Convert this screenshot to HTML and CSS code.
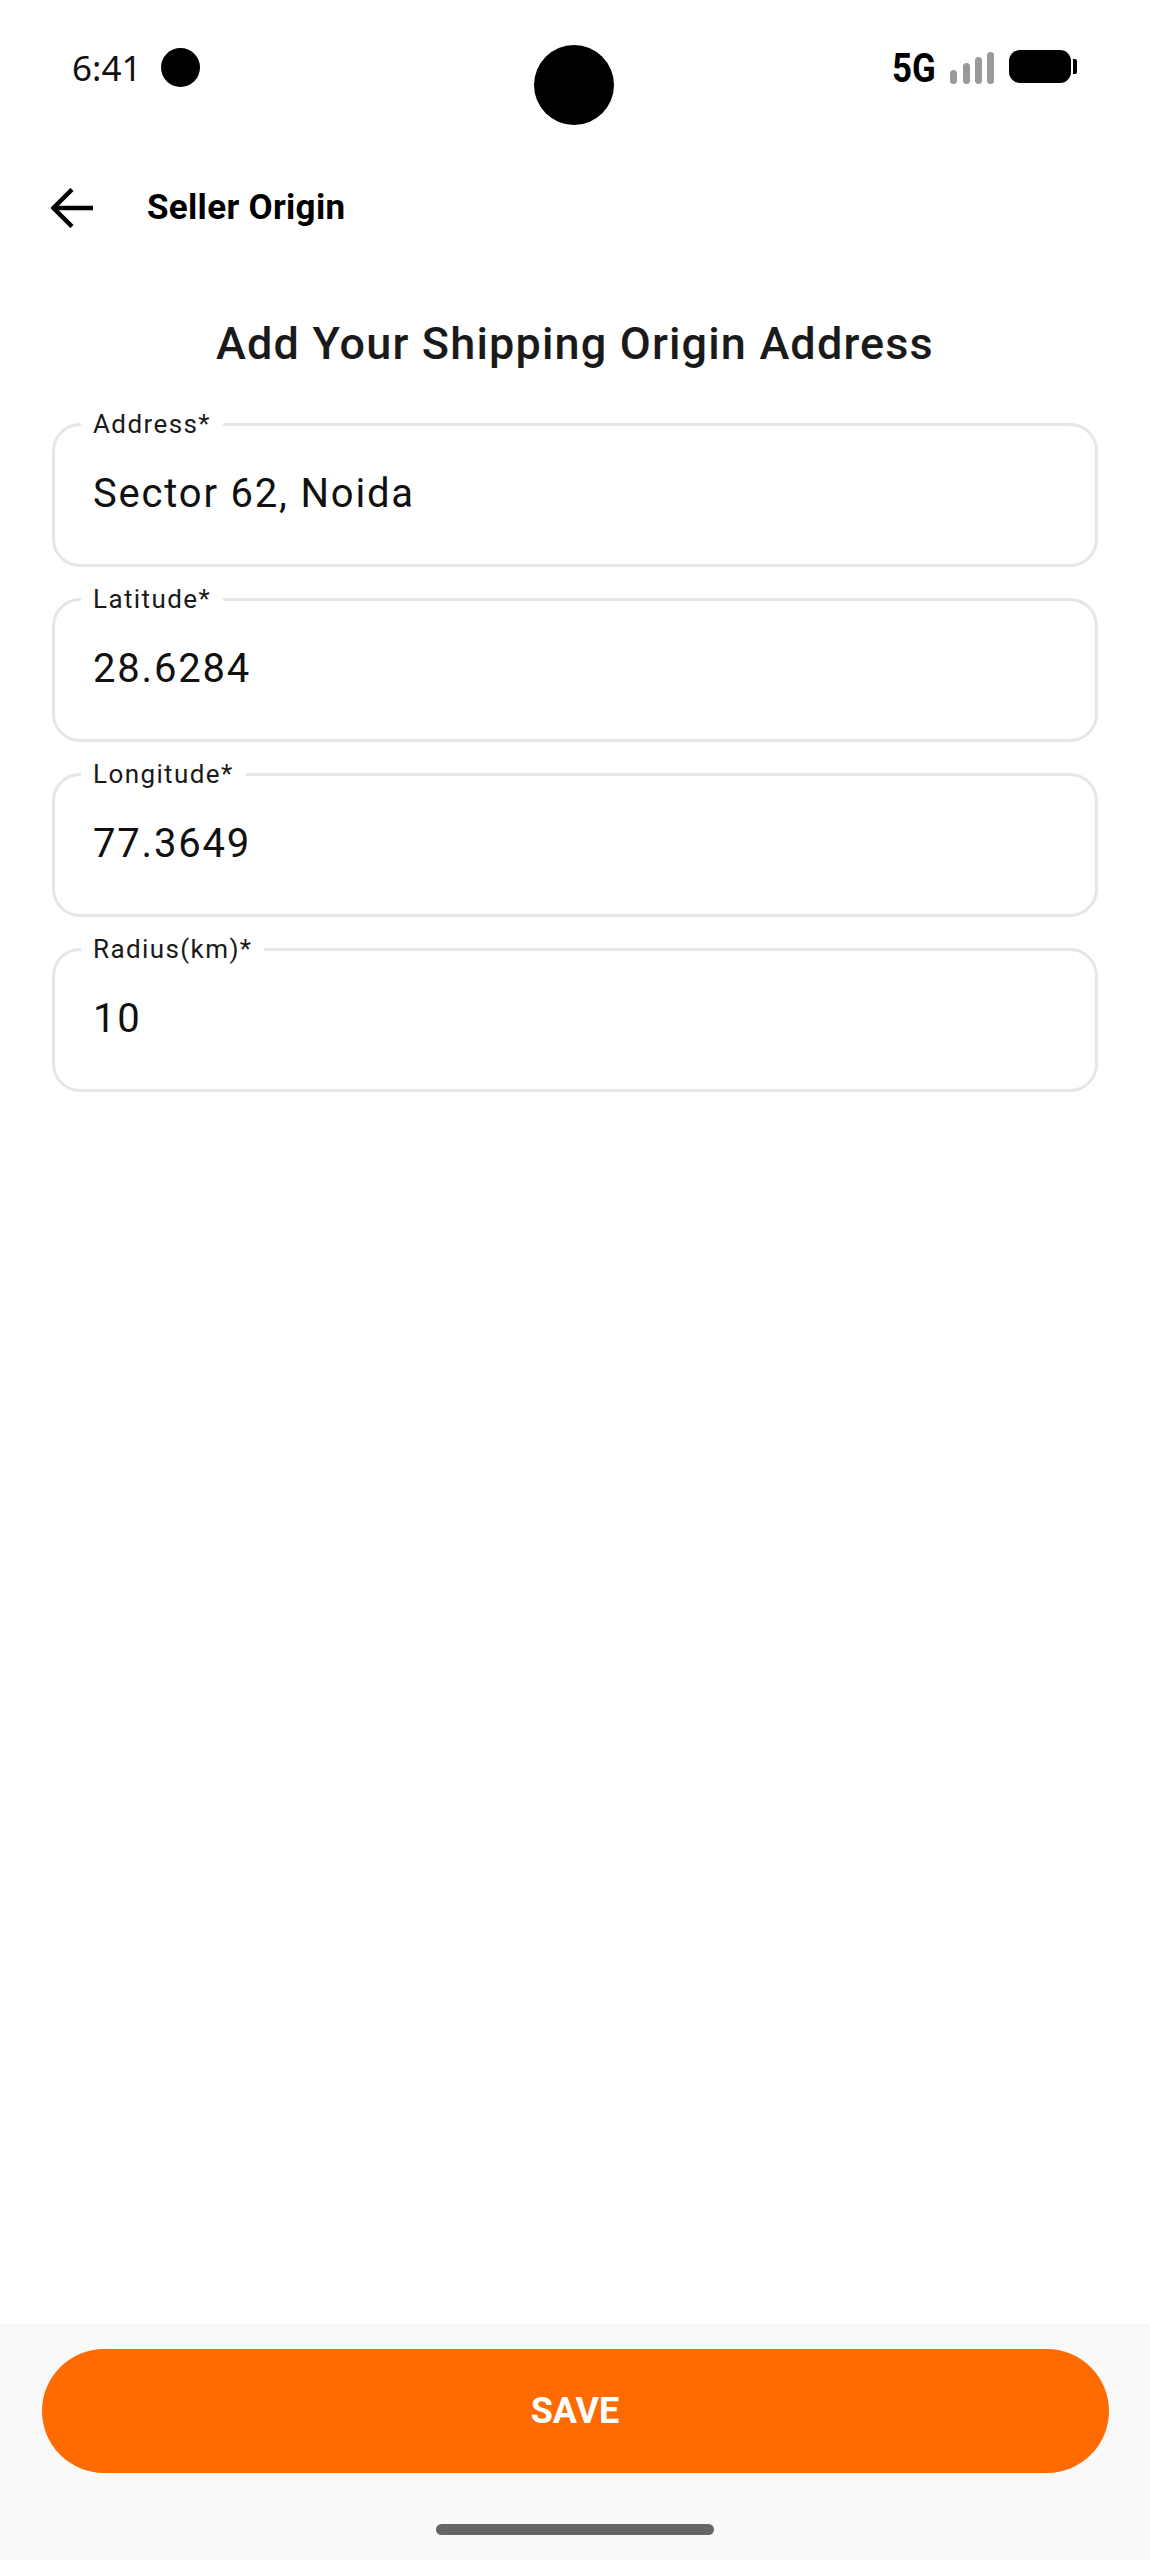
FILE: index.html
```html
<!DOCTYPE html>
<html lang="en">
<head>
<meta charset="utf-8">
<title>Seller Origin</title>
<link rel="stylesheet" href="styles.css">
</head>
<body>
<div class="screen">
  <div class="camera"></div>
  <header class="status">
    <div class="status-left">
      <span class="time">6:41</span>
      <span class="dot"></span>
    </div>
    <div class="status-right">
      <span class="net">5G</span>
      <svg class="signal" width="44" height="32" viewBox="0 0 44 32">
        <rect x="0" y="18" width="7" height="14" rx="3.5"/>
        <rect x="13" y="11" width="7" height="21" rx="3.5"/>
        <rect x="25" y="5" width="7" height="27" rx="3.5"/>
        <rect x="37" y="0" width="7" height="32" rx="3.5"/>
      </svg>
      <svg class="battery" width="68" height="33" viewBox="0 0 68 33">
        <rect x="0" y="0" width="62" height="33" rx="11"/>
        <path d="M64 9h2a2 2 0 0 1 2 2v11a2 2 0 0 1-2 2h-2z"/>
      </svg>
    </div>
  </header>
  <nav class="appbar">
    <svg class="back" width="42" height="40" viewBox="0 0 42 40">
      <path d="M42 20H4M21 1.5 2.5 20 21 38.5" fill="none" stroke="#000" stroke-width="4.5"/>
    </svg>
    <h1 class="appbar-title">Seller Origin</h1>
  </nav>
  <main class="content">
    <h2 class="heading">Add Your Shipping Origin Address</h2>
    <fieldset class="field">
      <legend class="field-label">Address*</legend>
      <div class="field-value">Sector 62, Noida</div>
    </fieldset>
    <fieldset class="field">
      <legend class="field-label">Latitude*</legend>
      <div class="field-value">28.6284</div>
    </fieldset>
    <fieldset class="field">
      <legend class="field-label">Longitude*</legend>
      <div class="field-value">77.3649</div>
    </fieldset>
    <fieldset class="field">
      <legend class="field-label">Radius(km)*</legend>
      <div class="field-value">10</div>
    </fieldset>
  </main>
  <footer class="footer">
    <button class="save" type="button">SAVE</button>
    <div class="home-bar"></div>
  </footer>
</div>
</body>
</html>
```
FILE: styles.css
```css
* { box-sizing: border-box; }
html, body { margin: 0; padding: 0; background: #fff; }
body { font-family: Roboto, "Liberation Sans", sans-serif; color: #000; }
.screen { position: relative; width: 1150px; height: 2560px; display: flex; flex-direction: column; overflow: hidden; }
.camera { position: absolute; left: 534px; top: 45px; width: 80px; height: 80px; border-radius: 50%; background: #000; }
.status { height: 134px; padding: 48px 73px 0 72px; display: flex; justify-content: space-between; align-items: flex-start; }
.status-left { display: flex; align-items: center; gap: 19px; height: 39px; }
.time { width: 70px; font-family: "Noto Sans", sans-serif; font-size: 35px; line-height: 39px; color: #111; }
.dot { width: 39px; height: 39px; border-radius: 50%; background: #000; }
.status-right { display: flex; align-items: flex-start; padding-top: 2px; }
.net { width: 44px; margin-right: 14px; font-size: 41px; line-height: 36px; font-weight: 700; transform: scaleX(.85); transform-origin: 0 50%; white-space: nowrap; }
.signal { fill: #999; margin-right: 15px; margin-top: 2px; }
.battery { fill: #000; }
.appbar { height: 184px; padding: 0 0 0 51px; display: flex; align-items: flex-start; gap: 54px; }
.back { margin-top: 54px; }
.appbar-title { margin: 0; padding-top: 53px; font-size: 35px; line-height: 42px; font-weight: 700; letter-spacing: .3px; }
.content { flex: 1; padding: 0 52px; }
.heading { margin: 0 0 39px; text-align: center; font-size: 45px; line-height: 52px; font-weight: 500; letter-spacing: 1.15px; color: #1a1a1a; }
.field { display: block; margin: 0 0 17px; padding: 0 12px 0 26px; min-width: 0; height: 158px; border: 3px solid #e6e6e6; border-radius: 28px; }
.field-label { padding: 0 12px; font-size: 26px; line-height: 30px; letter-spacing: 1.4px; color: #1a1a1a; }
.field-value { padding: 31px 0 0 12px; font-size: 40px; line-height: 48px; letter-spacing: 1.8px; color: #111; }
.footer { height: 236px; padding-top: 25px; background: #f9f9f9; display: flex; flex-direction: column; align-items: center; }
.save { width: 1067px; height: 124px; border: 0; border-radius: 62px; background: #ff6b00; color: #fff; font-family: Roboto, "Liberation Sans", sans-serif; font-size: 36px; font-weight: 700; }
.home-bar { width: 278px; height: 11px; margin-top: 51px; border-radius: 6px; background: #666; }
```
